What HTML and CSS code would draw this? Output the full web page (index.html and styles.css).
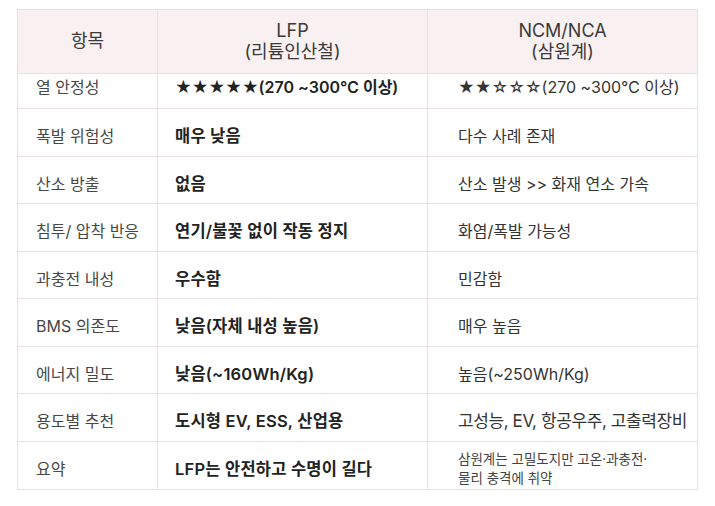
FILE: index.html
```html
<!DOCTYPE html>
<html lang="ko">
<head>
<meta charset="utf-8">
<link rel="stylesheet" href="styles.css">
</head>
<body>
<table class="cmp">
  <colgroup>
    <col class="c-label">
    <col class="c-lfp">
    <col class="c-ncm">
  </colgroup>
  <thead>
    <tr>
      <th class="h-label">항목</th>
      <th>LFP<br>(리튬인산철)</th>
      <th>NCM/NCA<br>(삼원계)</th>
    </tr>
  </thead>
  <tbody>
    <tr class="first">
      <td class="label">열 안정성</td>
      <td class="lfp stars">★★★★★(270 ~300℃ 이상)</td>
      <td class="ncm">★★☆☆☆(270 ~300℃ 이상)</td>
    </tr>
    <tr>
      <td class="label">폭발 위험성</td>
      <td class="lfp">매우 낮음</td>
      <td class="ncm">다수 사례 존재</td>
    </tr>
    <tr>
      <td class="label">산소 방출</td>
      <td class="lfp">없음</td>
      <td class="ncm">산소 발생 &gt;&gt; 화재 연소 가속</td>
    </tr>
    <tr>
      <td class="label">침투/ 압착 반응</td>
      <td class="lfp">연기/불꽃 없이 작동 정지</td>
      <td class="ncm">화염/폭발 가능성</td>
    </tr>
    <tr>
      <td class="label">과충전 내성</td>
      <td class="lfp">우수함</td>
      <td class="ncm">민감함</td>
    </tr>
    <tr>
      <td class="label">BMS 의존도</td>
      <td class="lfp">낮음(자체 내성 높음)</td>
      <td class="ncm">매우 높음</td>
    </tr>
    <tr>
      <td class="label">에너지 밀도</td>
      <td class="lfp">낮음(~160Wh/Kg)</td>
      <td class="ncm">높음(~250Wh/Kg)</td>
    </tr>
    <tr>
      <td class="label">용도별 추천</td>
      <td class="lfp">도시형 EV, ESS, 산업용</td>
      <td class="ncm big">고성능, EV, 항공우주, 고출력장비</td>
    </tr>
    <tr>
      <td class="label">요약</td>
      <td class="lfp">LFP는 안전하고 수명이 길다</td>
      <td class="ncm small">삼원계는 고밀도지만 고온·과충전·<br>물리 충격에 취약</td>
    </tr>
  </tbody>
</table>
</body>
</html>
```

FILE: styles.css
```css
html, body {
  margin: 0;
  padding: 0;
  background: #ffffff;
}

body {
  font-family: Inter, "Noto Sans CJK KR", sans-serif;
  color: #333;
}

.cmp {
  margin: 9px 0 0 17px;
  border-collapse: collapse;
  table-layout: fixed;
  width: 681px;
  border: 1px solid #ebe0e1;
}

.c-label { width: 140px; }
.c-lfp { width: 270px; }
.c-ncm { width: 270px; }

.cmp th,
.cmp td {
  border: 1px solid #ebe0e1;
  vertical-align: top;
  text-align: left;
  white-space: nowrap;
}

.cmp th {
  background: #f9f0f1;
  font-weight: 400;
  font-size: 18px;
  line-height: 21px;
  color: #3a3a3a;
  text-align: center;
  padding: 10px 0 11px;
}

.cmp th.h-label {
  vertical-align: middle;
  padding-bottom: 13px;
}

.cmp td {
  font-size: 16px;
  line-height: 23px;
  padding: 16px 0 7.5px;
}

.cmp tr.first td {
  padding-top: 1.5px;
  padding-bottom: 9.5px;
}

.cmp td.label {
  padding-left: 18px;
  color: #474747;
  font-weight: 400;
}

.cmp td.lfp {
  padding-left: 17px;
  color: #222;
  font-weight: 600;
  font-size: 16.5px;
  letter-spacing: 0.2px;
}

.cmp td.lfp.stars {
  font-size: 16px;
  letter-spacing: 0;
}

.cmp td.ncm {
  padding-left: 30px;
  color: #333;
  font-weight: 400;
}

.cmp td.big {
  font-size: 17px;
  letter-spacing: -0.4px;
}

.cmp td.small {
  font-size: 13.5px;
  line-height: 19px;
  padding-top: 8px;
  padding-bottom: 1.5px;
  color: #444;
}
```
